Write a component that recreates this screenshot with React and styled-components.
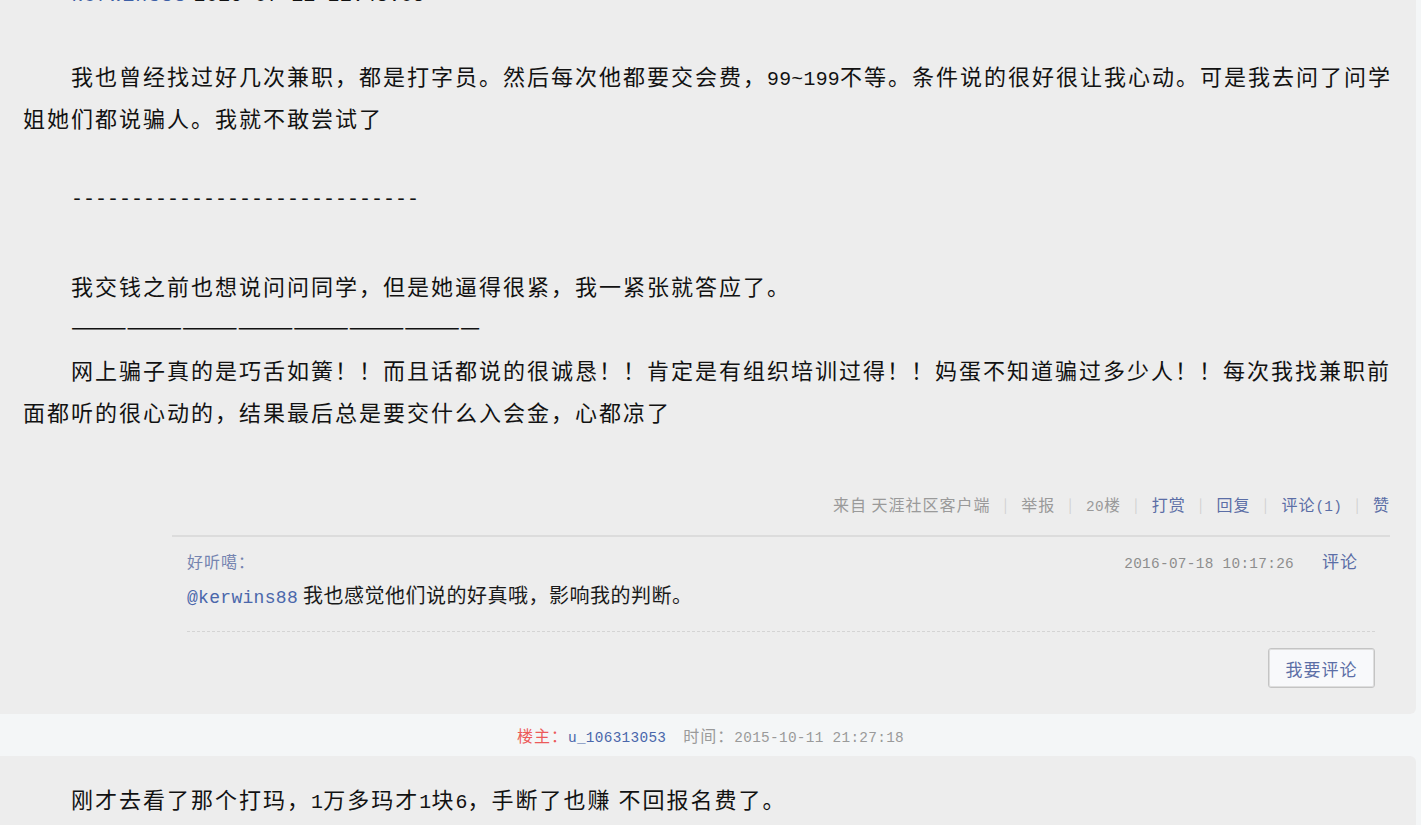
import React from 'react';
import styled, { createGlobalStyle } from 'styled-components';

const GlobalStyle = createGlobalStyle`
  html, body {
    margin: 0;
    padding: 0;
    background: #f4f6f7;
    font-family: "Noto Sans CJK SC", "Noto Sans", sans-serif;
    overflow: hidden;
  }
`;

const App = () => {
  return (
    <Page>
      <GlobalStyle />
      <Floor $top>
        <Content>
          <Line>
            <Mention>kerwins88</Mention> <Half>2016-07-11 21:48:05</Half>
          </Line>
          <Line />
          <Line>
            我也曾经找过好几次兼职，都是打字员。然后每次他都要交会费，<Half>99~199</Half>不等。条件说的很好很让我心动。可是我去问了问学姐她们都说骗人。我就不敢尝试了
          </Line>
          <Line />
          <Line>
            <Dashes>-----------------------------</Dashes>
          </Line>
          <Line />
          <Line>我交钱之前也想说问问同学，但是她逼得很紧，我一紧张就答应了。</Line>
          <Line>
            <EmDashes>——————————————————————</EmDashes>
          </Line>
          <Line>
            网上骗子真的是巧舌如簧！！而且话都说的很诚恳！！肯定是有组织培训过得！！妈蛋不知道骗过多少人！！每次我找兼职前面都听的很心动的，结果最后总是要交什么入会金，心都凉了
          </Line>
        </Content>

        <Actions>
          <Action>来自 天涯社区客户端</Action>
          <Sep>|</Sep>
          <Action>举报</Action>
          <Sep>|</Sep>
          <Action>
            <Half>20</Half>楼
          </Action>
          <Sep>|</Sep>
          <Action $link>打赏</Action>
          <Sep>|</Sep>
          <Action $link>回复</Action>
          <Sep>|</Sep>
          <Action $link>
            评论<Half>(1)</Half>
          </Action>
          <Sep>|</Sep>
          <Action $link>赞</Action>
        </Actions>

        <CommentBox>
          <CommentHead>
            <CommentUser>好听噶：</CommentUser>
            <CommentMeta>
              <CommentTime>
                <Half>2016-07-18 10:17:26</Half>
              </CommentTime>
              <CommentLink>评论</CommentLink>
            </CommentMeta>
          </CommentHead>
          <CommentText>
            <At>
              <Half>@kerwins88</Half>
            </At>{' '}
            我也感觉他们说的好真哦，影响我的判断。
          </CommentText>
          <CommentFoot>
            <ReplyButton>我要评论</ReplyButton>
          </CommentFoot>
        </CommentBox>
      </Floor>

      <FloorInfo>
        <Host>楼主：</Host>
        <HostName>
          <Half>u_106313053</Half>
        </HostName>
        <InfoTime>
          时间：<Half>2015-10-11 21:27:18</Half>
        </InfoTime>
      </FloorInfo>

      <Floor $next>
        <Content>
          <Line>
            刚才去看了那个打玛，<Half>1</Half>万多玛才<Half>1</Half>块<Half>6</Half>，手断了也赚 不回报名费了。
          </Line>
        </Content>
      </Floor>
    </Page>
  );
};

export default App;

const Page = styled.div`
  width: 1421px;
  min-height: 825px;
`;

const Floor = styled.div`
  background: #ededed;
  margin-right: 5px;
  padding: ${({ $next }) => ($next ? '21px 21px 40px 23px' : '0 21px 26px 23px')};
  margin-top: ${({ $top }) => ($top ? '-30px' : '0')};
  border-radius: ${({ $next }) => ($next ? '0 6px 0 0' : '0 0 6px 0')};
`;

const Content = styled.div`
  font-size: 22px;
  letter-spacing: 2px;
  line-height: 42px;
  color: #121212;
`;

const Line = styled.p`
  margin: 0;
  min-height: 42px;
  text-indent: 48px;
  word-break: break-all;
`;

const Half = styled.span`
  font-family: "Liberation Mono", monospace;
  font-size: 0.9em;
  letter-spacing: 0.3px;
  line-height: 1;
`;

const Mention = styled(Half)`
  color: #3d5fa6;
  letter-spacing: 1px;
`;

const Dashes = styled.span`
  font-family: "Liberation Mono", monospace;
  font-size: 20px;
  letter-spacing: 0;
  line-height: 1;
  vertical-align: 6px;
`;

const EmDashes = styled.span`
  letter-spacing: 0;
  font-size: 22.6px;
  line-height: 1;
  vertical-align: 2px;
`;

const Actions = styled.div`
  display: flex;
  justify-content: flex-end;
  align-items: center;
  margin: 57px 5px 0 0;
  font-size: 16px;
  letter-spacing: 1px;
  line-height: 30px;
  color: #9a9a9a;
`;

const Action = styled.span`
  color: ${({ $link }) => ($link ? '#5b6ea6' : '#9a9a9a')};
  white-space: pre;
`;

const Sep = styled.span`
  color: #cfcfcf;
  margin: 0 13px;
  font-size: 14px;
`;

const CommentBox = styled.div`
  margin: 16px 5px 0 149px;
  border-top: 2px solid #dcdcdc;
  padding: 11px 15px 0 15px;
`;

const CommentHead = styled.div`
  display: flex;
  justify-content: space-between;
  align-items: center;
  line-height: 26px;
  padding-right: 17px;
`;

const CommentUser = styled.span`
  font-size: 16px;
  letter-spacing: 1px;
  color: #7584b0;
`;

const CommentMeta = styled.span`
  display: flex;
  align-items: center;
  gap: 28px;
`;

const CommentTime = styled.span`
  font-size: 16px;
  letter-spacing: 1px;
  color: #8d8d8d;
`;

const CommentLink = styled.span`
  font-size: 17px;
  letter-spacing: 1px;
  color: #5b6ea6;
`;

const CommentText = styled.div`
  margin-top: 7px;
  font-size: 20px;
  letter-spacing: 0.5px;
  line-height: 28px;
  color: #1a1a1a;
  padding-bottom: 22px;
  border-bottom: 1px dashed #d4d4d4;
`;

const At = styled.span`
  color: #4a67ab;
`;

const CommentFoot = styled.div`
  display: flex;
  justify-content: flex-end;
  padding-top: 16px;
`;

const ReplyButton = styled.button`
  width: 107px;
  height: 40px;
  background: #f8f9fb;
  border: 1px solid #c4c4c4;
  box-shadow: inset 0 0 0 1px #dedede;
  border-radius: 3px;
  font-family: "Noto Sans CJK SC", sans-serif;
  font-size: 17px;
  letter-spacing: 1px;
  color: #5b6ea6;
  cursor: pointer;
`;

const FloorInfo = styled.div`
  height: 42px;
  display: flex;
  justify-content: center;
  align-items: center;
  font-size: 16px;
  letter-spacing: 1px;
  color: #9a9a9a;
`;

const Host = styled.span`
  color: #ec5a5a;
`;

const HostName = styled.span`
  color: #4a67ab;
  margin-right: 17px;
`;

const InfoTime = styled.span`
  color: #9a9a9a;
`;
